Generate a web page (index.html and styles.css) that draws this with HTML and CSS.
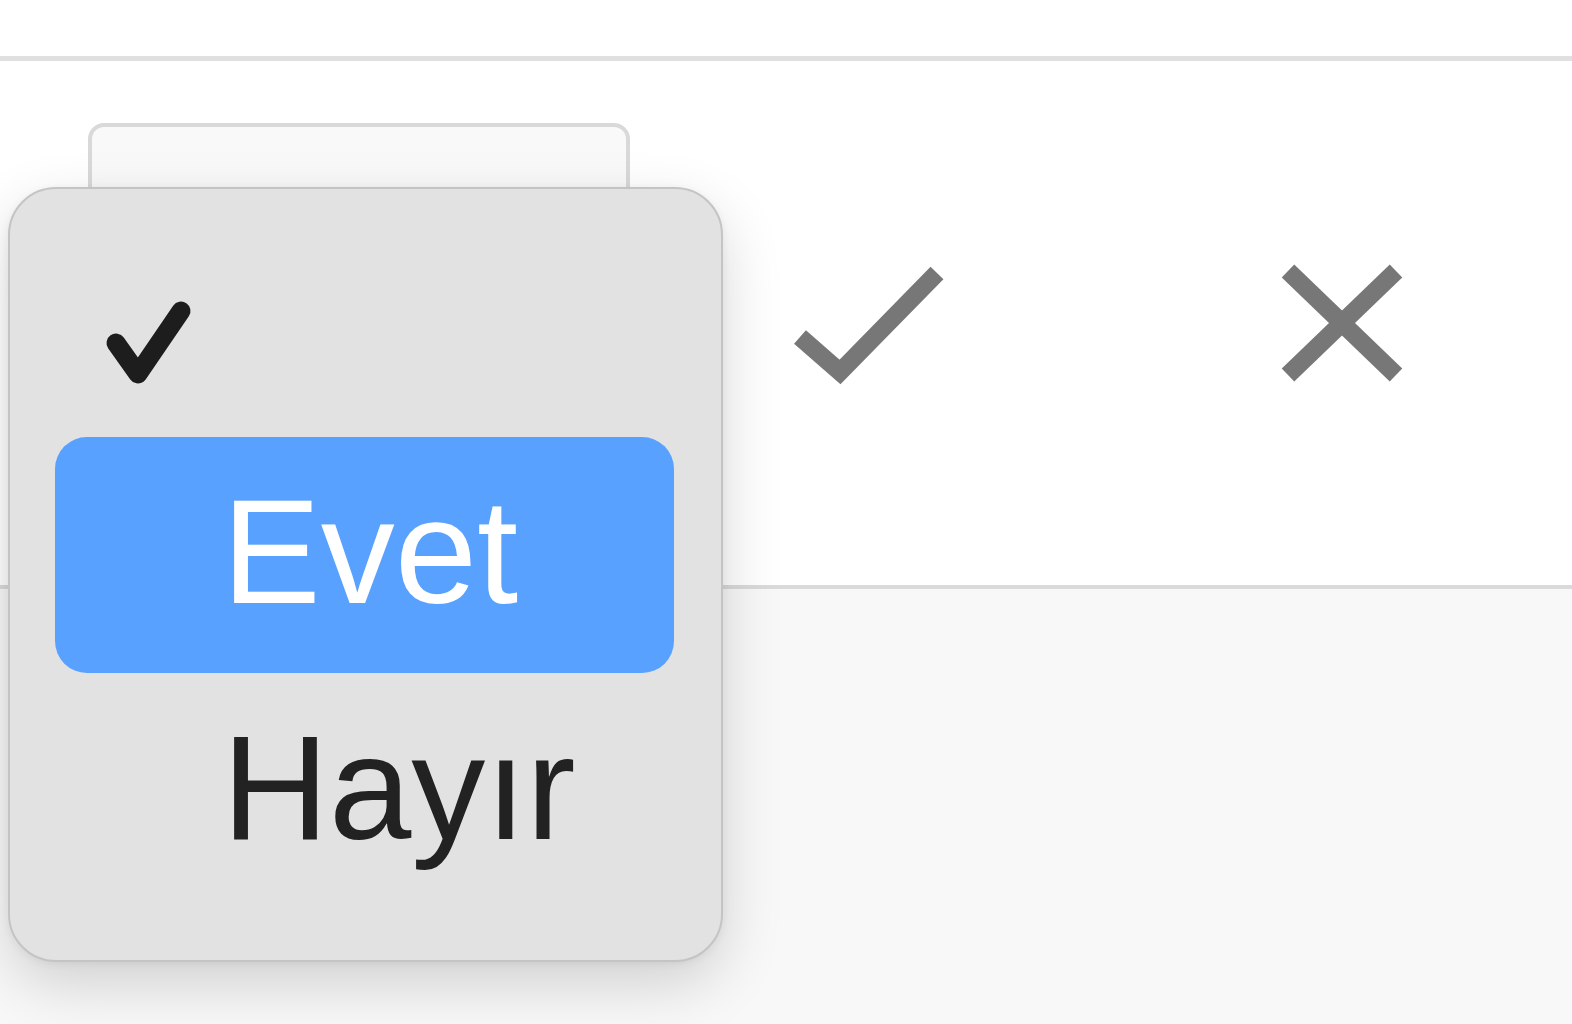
FILE: index.html
```html
<!DOCTYPE html>
<html lang="tr">
<head>
  <meta charset="UTF-8" />
  <meta name="viewport" content="width=device-width, initial-scale=1.0"/>
  <title>Seçim</title>
  <link rel="stylesheet" href="styles.css">
</head>

<body>
  <div class="topbar"></div>

  <div class="panel">
    <div class="select"></div>

    <svg class="icon-ok" width="180" height="150" viewBox="0 0 180 150">
      <polyline points="20,87 60,122 157,23" fill="none" stroke="#777" stroke-width="18" stroke-linejoin="miter"/>
    </svg>

    <svg class="icon-no" width="150" height="150" viewBox="0 0 150 150">
      <line x1="21" y1="21" x2="129" y2="125" stroke="#777" stroke-width="18"/>
      <line x1="129" y1="21" x2="21" y2="125" stroke="#777" stroke-width="18"/>
    </svg>
  </div>

  <!-- açılır liste -->
  <div class="menu">
    <div class="opt checked">
      <span class="mark">
        <svg width="100" height="100" viewBox="0 0 100 100">
          <polyline points="19,51 41,82 84,19" fill="none" stroke="#1d1d1d" stroke-width="19" stroke-linecap="round" stroke-linejoin="round"/>
        </svg>
      </span>
      <span class="label"></span>
    </div>
    <div class="opt active">
      <span class="mark"></span>
      <span class="label">Evet</span>
    </div>
    <div class="opt">
      <span class="mark"></span>
      <span class="label">Hayır</span>
    </div>
  </div>
</body>
</html>
```

FILE: styles.css
```css
body {
  margin: 0;
  background: #f8f8f8;
  font-family: "Liberation Sans", Arial, sans-serif;
}

.topbar {
  height: 56px;
  background: #fff;
  border-bottom: 5px solid #e0e0e0;
}

.panel {
  display: flex;
  align-items: center;
  background: #fff;
  padding: 62px 0 58px 88px;
  border-bottom: 4px solid #dadada;
}

.select {
  width: 542px;
  height: 404px;
  box-sizing: border-box;
  border: 4px solid #d9d9d9;
  border-radius: 16px;
  background: #f9f9f9;
}

.icon-ok {
  display: block;
  margin-left: 150px;
}

.icon-no {
  display: block;
  margin-left: 307px;
}

.menu {
  position: absolute;
  left: 8px;
  top: 187px;
  width: 715px;
  height: 775px;
  box-sizing: border-box;
  padding: 12px 47px 0 45px;
  background: #e2e2e2;
  border: 2px solid #c4c4c4;
  border-radius: 48px;
  box-shadow: 0 22px 60px rgba(0, 0, 0, 0.16), 0 2px 8px rgba(0, 0, 0, 0.06);
}

.opt {
  display: grid;
  grid-template-columns: 167px 1fr;
  align-items: center;
  height: 236px;
  border-radius: 32px;
  font-size: 148px;
  color: #222;
}

.opt .label {
  padding-bottom: 6px;
}

.opt.active {
  background: #58a1fe;
  color: #fff;
}

.mark svg {
  display: block;
  margin: 46px 0 0 42px;
}
```
